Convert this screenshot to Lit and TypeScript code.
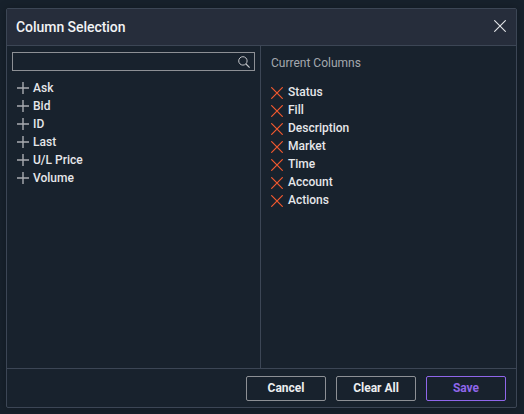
import { LitElement, html, css, svg } from "lit";
import { customElement } from "lit/decorators.js";

const available = ["Ask", "Bid", "ID", "Last", "U/L Price", "Volume"];
const current = ["Status", "Fill", "Description", "Market", "Time", "Account", "Actions"];

@customElement("app-root")
export class AppRoot extends LitElement {
  static styles = css`
    :host {
      display: block;
      width: 524px;
      height: 414px;
      background: #17212c;
      font-family: Roboto, "Liberation Sans", sans-serif;
      box-sizing: border-box;
      padding: 8px 7px 6px 6px;
    }
    .dialog {
      height: 100%;
      box-sizing: border-box;
      border: 1px solid #3c4655;
      border-radius: 2px;
      background: #18222d;
      display: flex;
      flex-direction: column;
      box-shadow: 0 0 8px rgba(0, 0, 0, 0.25);
    }
    .header {
      height: 37px;
      flex: none;
      box-sizing: border-box;
      background: #262d3b;
      border-bottom: 1px solid #3c4655;
      display: flex;
      align-items: center;
      justify-content: space-between;
      padding: 0 10px 0 9px;
    }
    .title {
      color: #f2f3f5;
      font-size: 14px;
      font-weight: 500;
      letter-spacing: -0.05px;
      line-height: 36px;
    }
    .close {
      display: block;
      width: 12px;
      height: 12px;
      margin-top: -2px;
    }
    .body {
      flex: 1;
      display: flex;
      min-height: 0;
    }
    .left {
      width: 254px;
      flex: none;
      box-sizing: border-box;
      border-right: 1px solid #3c4655;
      padding: 6px 5px 0 5px;
    }
    .search {
      height: 19px;
      box-sizing: border-box;
      border: 1px solid #8d9095;
      display: flex;
      align-items: center;
      justify-content: flex-end;
      padding-right: 4px;
    }
    .search svg {
      display: block;
      width: 12px;
      height: 12px;
    }
    .list {
      display: flex;
      flex-direction: column;
    }
    .left .list {
      margin-top: 8px;
    }
    .row {
      height: 18px;
      display: flex;
      align-items: center;
      color: #e6e7ea;
      font-size: 12px;
      font-weight: 500;
    }
    .left .row {
      padding-left: 5px;
      gap: 4px;
    }
    .right .row {
      gap: 5px;
    }
    .icon {
      display: block;
      width: 12px;
      height: 12px;
      flex: none;
    }
    .right .icon {
      margin-top: 2px;
    }
    .right {
      flex: 1;
      padding: 9px 10px 0 10px;
    }
    .heading {
      color: #a4a8ae;
      font-size: 12px;
      line-height: 16px;
      margin-bottom: 12px;
    }
    .footer {
      height: 39px;
      flex: none;
      box-sizing: border-box;
      border-top: 1px solid #3c4655;
      display: flex;
      align-items: center;
      justify-content: flex-end;
      gap: 10px;
      padding: 0 10px;
    }
    button {
      width: 80px;
      height: 25px;
      box-sizing: border-box;
      background: transparent;
      border: 1px solid #8d9095;
      border-radius: 2px;
      color: #eceef0;
      font-family: inherit;
      font-size: 12px;
      font-weight: 700;
      padding: 0;
    }
    button.save {
      border-color: #8f66ea;
      color: #8f66ea;
    }
  `;

  render() {
    const plus = html`<svg class="icon" viewBox="0 0 12 12">
      ${svg`<path d="M6 0V12M0 6H12" stroke="#a9acb1" stroke-width="1.4" fill="none"/>`}
    </svg>`;
    const cross = html`<svg class="icon" viewBox="0 0 12 12">
      ${svg`<path d="M0.3 0.3L11.7 11.7M11.7 0.3L0.3 11.7" stroke="#f4592e" stroke-width="1.2" fill="none"/>`}
    </svg>`;
    return html`
      <div class="dialog">
        <div class="header">
          <span class="title">Column Selection</span>
          <svg class="close" viewBox="0 0 12 12">
            ${svg`<path d="M0.3 0.3L11.7 11.7M11.7 0.3L0.3 11.7" stroke="#e4e6e9" stroke-width="1.1" fill="none"/>`}
          </svg>
        </div>
        <div class="body">
          <div class="left">
            <div class="search">
              <svg viewBox="0 0 12 12">
                ${svg`<circle cx="4.9" cy="4.9" r="4.2" stroke="#c4c6ca" stroke-width="1" fill="none"/>
                <path d="M8 8L11.6 11.6" stroke="#c4c6ca" stroke-width="1.1" fill="none"/>`}
              </svg>
            </div>
            <div class="list">
              ${available.map((n) => html`<div class="row">${plus}<span>${n}</span></div>`)}
            </div>
          </div>
          <div class="right">
            <div class="heading">Current Columns</div>
            <div class="list">
              ${current.map((n) => html`<div class="row">${cross}<span>${n}</span></div>`)}
            </div>
          </div>
        </div>
        <div class="footer">
          <button>Cancel</button>
          <button>Clear All</button>
          <button class="save">Save</button>
        </div>
      </div>
    `;
  }
}
